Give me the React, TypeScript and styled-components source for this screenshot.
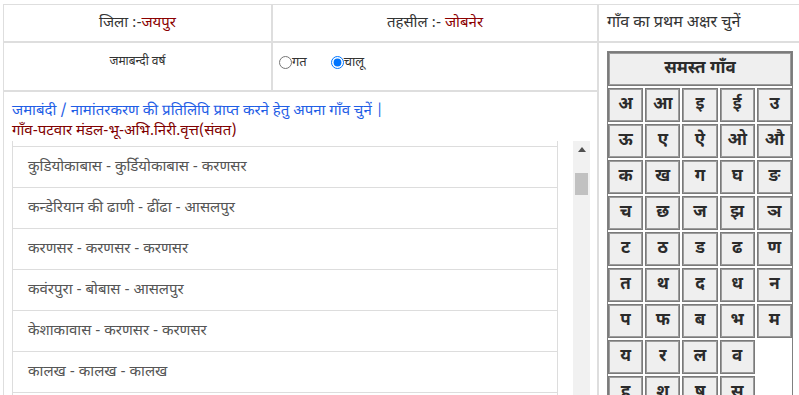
import React from "react";
import styled, { createGlobalStyle } from "styled-components";

const Global = createGlobalStyle`
  html, body { margin: 0; padding: 0; overflow: hidden; background: #fff; }
  body { font-family: "Noto Sans Devanagari", "Lohit Devanagari", "Noto Sans", "FreeSans", sans-serif; color: #333; }
  * { box-sizing: border-box; }
`;

const Frame = styled.div`
  margin: 4px 0 0 3px;
  width: 820px;
  display: grid;
  grid-template-columns: 267px 324px 1fr;
  grid-template-rows: 36px 47px auto;
  gap: 2px;
  padding: 1px 0 0 1px;
  background: #dedede;
`;

const Cell = styled.div<{ $align?: "center" | "left"; $size?: number }>`
  background: #fff;
  display: flex;
  align-items: center;
  justify-content: ${(p) => (p.$align === "left" ? "flex-start" : "center")};
  padding: 0 8px;
  font-size: ${(p) => p.$size ?? 15}px;
  color: #333;
`;

const Value = styled.span`
  color: #8b0000;
`;

const YearCell = styled.div<{ $align?: "center" | "left" }>`
  background: #fff;
  display: flex;
  align-items: flex-start;
  justify-content: ${(p) => (p.$align === "left" ? "flex-start" : "center")};
  padding: 11px 8px 0 ${(p) => (p.$align === "left" ? 6 : 8)}px;
  font-size: 12px;
  color: #333;
`;

const RadioGroup = styled.div`
  display: flex;
  gap: 24px;
  align-items: center;
`;

const RadioLabel = styled.label`
  display: flex;
  align-items: center;
  font-size: 13px;
  input { margin: 0; width: 13px; height: 13px; }
`;

const LetterPanel = styled.div`
  background: #fff;
  grid-column: 3;
  grid-row: 2 / span 2;
  padding: 8px 8px 0;
`;

const LetterGrid = styled.div`
  width: 186px;
  display: grid;
  grid-template-columns: repeat(5, 1fr);
  grid-auto-rows: 34px;
  gap: 2px;
  border: 1px solid #808080;
  background: #fff;
`;

const LetterButton = styled.div<{ $wide?: boolean }>`
  grid-column: ${(p) => (p.$wide ? "1 / -1" : "auto")};
  background: #efefef;
  border: 1px solid #7a7a7a;
  box-shadow: inset 0 0 0 1px #9c9c9c;
  display: flex;
  align-items: center;
  justify-content: center;
  font-size: 17px;
  font-weight: bold;
  color: #2b2b2b;
`;

const Blank = styled.div``;

const ListArea = styled.div`
  background: #fff;
  grid-column: 1 / span 2;
  grid-row: 3;
  padding: 8px 8px 0 8px;
`;

const Intro = styled.div`
  color: #1f5ee6;
  font-size: 15px;
  line-height: 20px;
  margin-top: 2px;
`;

const Caption = styled.div`
  color: #800000;
  font-size: 15px;
  line-height: 20px;
`;

const ListFrame = styled.div`
  margin-top: -1px;
  height: 300px;
  display: flex;
  align-items: stretch;
  gap: 15px;
  width: 578px;
`;

const List = styled.div`
  flex: 1;
  border-left: 1px solid #dddddd;
  border-right: 1px solid #dddddd;
  padding-top: 5px;
  overflow: hidden;
`;

const Item = styled.div`
  height: 41px;
  border-top: 1px solid #dddddd;
  padding-left: 15px;
  display: flex;
  align-items: center;
  font-size: 15px;
  color: #555;
`;

const Rail = styled.div`
  width: 17px;
  background: #f1f1f1;
  display: flex;
  flex-direction: column;
  align-items: center;
`;

const RailButton = styled.div`
  height: 17px;
  width: 17px;
  display: flex;
  align-items: center;
  justify-content: center;
`;

const Thumb = styled.div`
  margin-top: 15px;
  width: 13px;
  height: 22px;
  background: #c1c1c1;
`;

const letters: (string | null)[] = [
  "अ", "आ", "इ", "ई", "उ",
  "ऊ", "ए", "ऐ", "ओ", "औ",
  "क", "ख", "ग", "घ", "ङ",
  "च", "छ", "ज", "झ", "ञ",
  "ट", "ठ", "ड", "ढ", "ण",
  "त", "थ", "द", "ध", "न",
  "प", "फ", "ब", "भ", "म",
  "य", "र", "ल", "व", null,
  "ह", "श", "ष", "स", null,
];

const villages = [
  "कुडियोकाबास - कुर्डियोकाबास - करणसर",
  "कन्डेरियान की ढाणी - ढींढा - आसलपुर",
  "करणसर - करणसर - करणसर",
  "कवंरपुरा - बोबास - आसलपुर",
  "केशाकावास - करणसर - करणसर",
  "कालख - कालख - कालख",
  "कालवाड - कालवाड - कालवाड",
];

export default function App() {
  return (
    <>
      <Global />
      <Frame>
        <Cell>
          जिला :-<Value>जयपुर</Value>
        </Cell>
        <Cell>
          तहसील :-&nbsp;<Value>जोबनेर</Value>
        </Cell>
        <Cell $align="left" $size={16}>गाँव का प्रथम अक्षर चुनें</Cell>

        <YearCell>जमाबन्दी वर्ष</YearCell>
        <YearCell $align="left">
          <RadioGroup>
            <RadioLabel>
              <input type="radio" name="year" />
              गत
            </RadioLabel>
            <RadioLabel>
              <input type="radio" name="year" defaultChecked />
              चालू
            </RadioLabel>
          </RadioGroup>
        </YearCell>

        <LetterPanel>
          <LetterGrid>
            <LetterButton $wide>समस्त गाँव</LetterButton>
            {letters.map((l, i) =>
              l ? <LetterButton key={i}>{l}</LetterButton> : <Blank key={i} />
            )}
          </LetterGrid>
        </LetterPanel>

        <ListArea>
          <Intro>जमाबंदी / नामांतरकरण की प्रतिलिपि प्राप्त करने हेतु अपना गाँव चुनें |</Intro>
          <Caption>गाँव-पटवार मंडल-भू-अभि.निरी.वृत्त(संवत)</Caption>
          <ListFrame>
            <List>
              {villages.map((v) => (
                <Item key={v}>{v}</Item>
              ))}
            </List>
            <Rail>
              <RailButton>
                <svg width="8" height="5" viewBox="0 0 8 5">
                  <path d="M0 5 L4 0 L8 5 Z" fill="#505050" />
                </svg>
              </RailButton>
              <Thumb />
            </Rail>
          </ListFrame>
        </ListArea>
      </Frame>
    </>
  );
}
